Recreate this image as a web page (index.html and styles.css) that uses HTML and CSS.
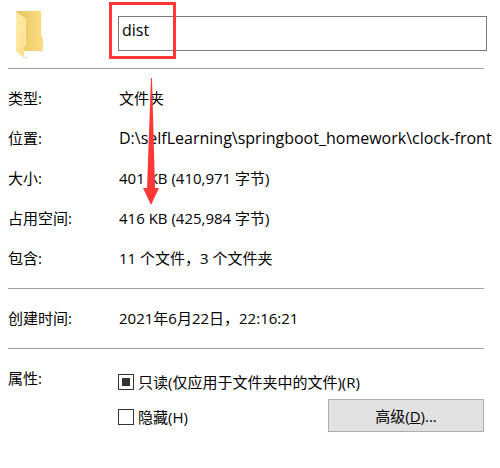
FILE: index.html
```
<!DOCTYPE html>
<html lang="zh-CN">
<head>
  <meta charset="UTF-8">
  <meta name="viewport" content="width=device-width, initial-scale=1.0">
  <title>dist 属性</title>
  <link rel="stylesheet" href="styles.css">
</head>
<body>
  <form class="properties">
    <!-- 文件夹名称 -->
    <div class="name-row">
      <svg class="folder-icon" width="32" height="50" viewBox="0 0 32 50" aria-hidden="true">
        <defs>
          <linearGradient id="folderBack" x1="0" y1="0" x2="1" y2="0">
            <stop offset="0" stop-color="#e6c25c"/>
            <stop offset="1" stop-color="#fbde83"/>
          </linearGradient>
          <linearGradient id="folderFront" x1="0" y1="0" x2="1" y2="1">
            <stop offset="0" stop-color="#ffedb0"/>
            <stop offset="1" stop-color="#fbdc87"/>
          </linearGradient>
        </defs>
        <path d="M7 47l4 1v-3zM26 40h3l-3 1z" fill="#e4e4e4"/>
        <path d="M0 0h25v24l2 3v13H0z" fill="url(#folderBack)"/>
        <path d="M0 0l3 3 5 3 2 2v27l-2 1v11l-4-3-4-4z" fill="url(#folderFront)"/>
        <path d="M9 8v27" stroke="#fdeab0" fill="none"/>
      </svg>
      <div class="name-field">
        <input class="name-input" type="text" value="dist" aria-label="名称">
        <span class="highlight-box"></span>
      </div>
    </div>

    <!-- 基本信息 -->
    <dl class="section details">
      <dt>类型:</dt>
      <dd>文件夹</dd>
      <dt>位置:</dt>
      <dd class="path">D:\selfLearning\springboot_homework\clock-front</dd>
      <dt>大小:</dt>
      <dd>401 KB (410,971 字节)</dd>
      <dt>占用空间:</dt>
      <dd>416 KB (425,984 字节)</dd>
      <dt>包含:</dt>
      <dd>11 个文件，3 个文件夹</dd>
    </dl>

    <dl class="section details">
      <dt>创建时间:</dt>
      <dd>2021年6月22日，22:16:21</dd>
    </dl>

    <!-- 属性 -->
    <div class="section attributes">
      <span class="attributes-title">属性:</span>
      <div class="options">
        <div class="option">
          <input type="checkbox" id="readonly" checked>
          <label for="readonly">只读(仅应用于文件夹中的文件)(R)</label>
        </div>
        <div class="option">
          <input type="checkbox" id="hidden">
          <label for="hidden">隐藏(H)</label>
          <button class="advanced" type="button">高级(<u>D</u>)...</button>
        </div>
      </div>
    </div>

    <svg class="arrow" width="16" height="127" viewBox="0 0 16 127" aria-hidden="true">
      <path d="M8 0h1l3 110h4L8 127 0 110h4z" fill="#ff3737"/>
    </svg>
  </form>
</body>
</html>
```
FILE: styles.css
```
body {
  margin: 0;
  background-color: #ffffff;
  color: #000000;
}
body, input, button {
  font-family: "Open Sans", "Noto Sans CJK SC", sans-serif;
  font-size: 15px;
}
.properties {
  position: relative;
  padding: 0 16px 0 8px;
}
.name-row {
  display: grid;
  grid-template-columns: 110px 1fr;
  height: 68px;
}
.folder-icon {
  margin: 11px 0 0 8px;
}
.name-field {
  position: relative;
  margin: 16px -3px 0 0;
}
.name-input {
  box-sizing: border-box;
  width: 100%;
  height: 35px;
  padding: 0 3px 8px;
  border: 1px solid #7a7a7a;
  background-color: #ffffff;
  color: #000000;
  font-size: 16px;
  outline: none;
}
.highlight-box {
  position: absolute;
  top: -14px;
  left: -9px;
  width: 61px;
  height: 51px;
  border: 3px solid #ff3737;
  pointer-events: none;
}
.section {
  margin: 0;
  padding: 9px 0 10px;
  border-top: 1px solid #a0a0a0;
}
.details {
  display: grid;
  grid-template-columns: 111px 1fr;
  grid-auto-rows: 40px;
  line-height: 40px;
  white-space: nowrap;
}
.details dd {
  margin: 0;
}
.details .path {
  font-size: 16px;
}
.attributes {
  display: grid;
  grid-template-columns: 110px 1fr;
}
.attributes-title {
  line-height: 40px;
}
.options {
  padding-top: 6px;
}
.option {
  display: flex;
  align-items: center;
  gap: 4px;
  height: 35px;
}
.option input {
  appearance: none;
  box-sizing: border-box;
  width: 16px;
  height: 16px;
  margin: 0;
  padding: 3px;
  border: 1px solid #333333;
  background-color: #ffffff;
}
.option input:checked {
  background-color: #333333;
  background-clip: content-box;
}
.advanced {
  box-sizing: border-box;
  width: 156px;
  height: 33px;
  margin: 0 0 3px auto;
  padding: 0;
  border: 1px solid #adadad;
  background-color: #e1e1e1;
  color: #000000;
}
.arrow {
  position: absolute;
  top: 78px;
  left: 143px;
}
```
